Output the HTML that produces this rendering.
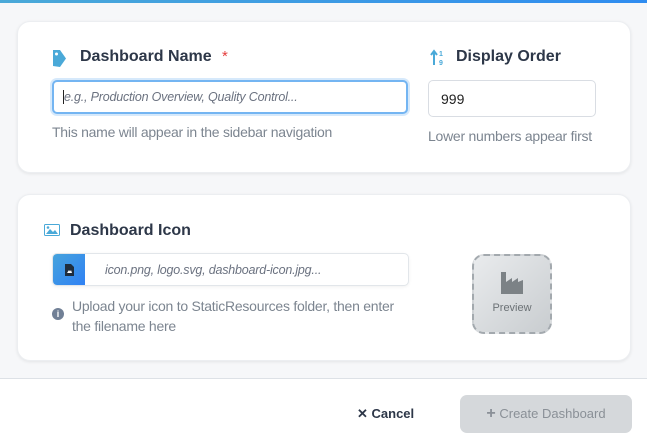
<!DOCTYPE html>
<html><head><style>
*{box-sizing:border-box;margin:0;padding:0}
body{width:647px;height:448px;background:#f6f7f9;font-family:"Liberation Sans",sans-serif;position:relative;overflow:hidden}
.top{position:absolute;left:0;top:0;width:647px;height:3px;background:linear-gradient(90deg,#4aa9d8,#2f8cf0)}
.card{position:absolute;left:17px;width:614px;background:#fff;border-radius:13px;box-shadow:0 1px 3px rgba(0,0,0,.08);border:1px solid #eceef1}
.t{position:absolute;font-size:16px;font-weight:bold;color:#2d3748}
.h{position:absolute;font-size:14px;color:#7c8590;letter-spacing:-0.25px}
.in{position:absolute;background:#fff;border-radius:5px;font-size:13px}
.footer{position:absolute;left:0;top:378px;width:647px;height:70px;background:#fff;border-top:1px solid #dde1e6}
</style></head><body>
<div class="top"></div>
<div class="card" style="top:21px;height:152px"></div>
<div class="card" style="top:194px;height:167px"></div>

<svg style="position:absolute;left:53px;top:50px" width="13" height="17" viewBox="0 0 13 17"><path d="M0 0h7l6 8.5-6 8.5-7-1z" fill="#4aa9d8" transform="rotate(0)"/><circle cx="3.5" cy="4" r="1.5" fill="#fff"/></svg>
<div class="t" style="left:80px;top:48px">Dashboard Name</div>
<div style="position:absolute;left:222px;top:48px;color:#e53e3e;font-size:15px">*</div>
<div class="in" style="left:52px;top:80px;width:356px;height:34px;border:2px solid #74b5f2;box-shadow:0 0 0 2px #d6e9fb"></div>
<div style="position:absolute;left:63px;top:90px;font-size:12.5px;font-style:italic;color:#6b7280;letter-spacing:-0.2px"><span style="border-left:1px solid #222;"></span>e.g., Production Overview, Quality Control...</div>
<div class="h" style="left:52px;top:124px">This name will appear in the sidebar navigation</div>

<svg style="position:absolute;left:430px;top:49px" width="16" height="17" viewBox="0 0 16 17"><path d="M4 16V3M1 6l3-4 3 4" stroke="#4aa9d8" stroke-width="2" fill="none"/><text x="9" y="7" font-size="7" font-weight="bold" fill="#4aa9d8" font-family="Liberation Sans">1</text><text x="9" y="16" font-size="7" font-weight="bold" fill="#4aa9d8" font-family="Liberation Sans">9</text></svg>
<div class="t" style="left:456px;top:48px">Display Order</div>
<div class="in" style="left:428px;top:80px;width:168px;height:37px;border:1px solid #d9dde3"></div>
<div style="position:absolute;left:441px;top:91px;font-size:14px;color:#222">999</div>
<div class="h" style="left:428px;top:128px">Lower numbers appear first</div>

<svg style="position:absolute;left:44px;top:224px" width="16" height="12" viewBox="0 0 16 12"><rect x="0.5" y="0.5" width="15" height="11" rx="1" fill="none" stroke="#4aa9d8"/><path d="M2 10l4-5 3 3 2-2 3 4z" fill="#4aa9d8"/><circle cx="4" cy="3.5" r="1.3" fill="#4aa9d8"/></svg>
<div class="t" style="left:70px;top:222px">Dashboard Icon</div>
<div class="in" style="left:52px;top:253px;width:357px;height:33px;border:1px solid #e2e6ea;box-shadow:0 1px 3px rgba(0,0,0,.06);overflow:hidden">
<div style="position:absolute;left:0;top:0;width:32px;height:33px;background:linear-gradient(135deg,#46a3dc,#2f80f5)"></div>
<svg style="position:absolute;left:12px;top:10px" width="9" height="12" viewBox="0 0 9 12"><path d="M0 0h6l3 3v9H0z" fill="#1f2d3d"/><path d="M2 9l2-3 1 1.5L6 6l1 3z" fill="#fff"/></svg>
</div>
<div style="position:absolute;left:105px;top:263px;font-size:12.5px;font-style:italic;color:#6b7280;letter-spacing:-0.2px">icon.png, logo.svg, dashboard-icon.jpg...</div>
<div style="position:absolute;left:52px;top:308px;width:12px;height:12px;border-radius:50%;background:#718096;color:#fff;font-size:9px;font-weight:bold;text-align:center;line-height:12px">i</div>
<div class="h" style="left:72px;top:296px;line-height:20px">Upload your icon to StaticResources folder, then enter<br>the filename here</div>

<div style="position:absolute;left:472px;top:254px;width:80px;height:80px;border:2px dashed #a3a9ae;border-radius:12px;background:linear-gradient(135deg,#e9ebed,#c9cdd0)"></div>
<svg style="position:absolute;left:501px;top:272px" width="22" height="22" viewBox="0 0 22 22"><path d="M0 0h5v10l6-4v4l6-4v4l5-2v14H0z" fill="#7c8286"/></svg>
<div style="position:absolute;left:472px;top:302px;width:80px;text-align:center;font-size:11px;color:#6b7175">Preview</div>

<div class="footer"></div>
<div style="position:absolute;left:357px;top:406px;font-size:13px;font-weight:bold;color:#2d3748">✕ Cancel</div>
<div style="position:absolute;left:460px;top:395px;width:172px;height:38px;border-radius:7px;background:#d5d8db;color:#8a9097;font-size:13px;text-align:center;line-height:38px"><b style="font-size:16px">+</b> Create Dashboard</div>
</body></html>
